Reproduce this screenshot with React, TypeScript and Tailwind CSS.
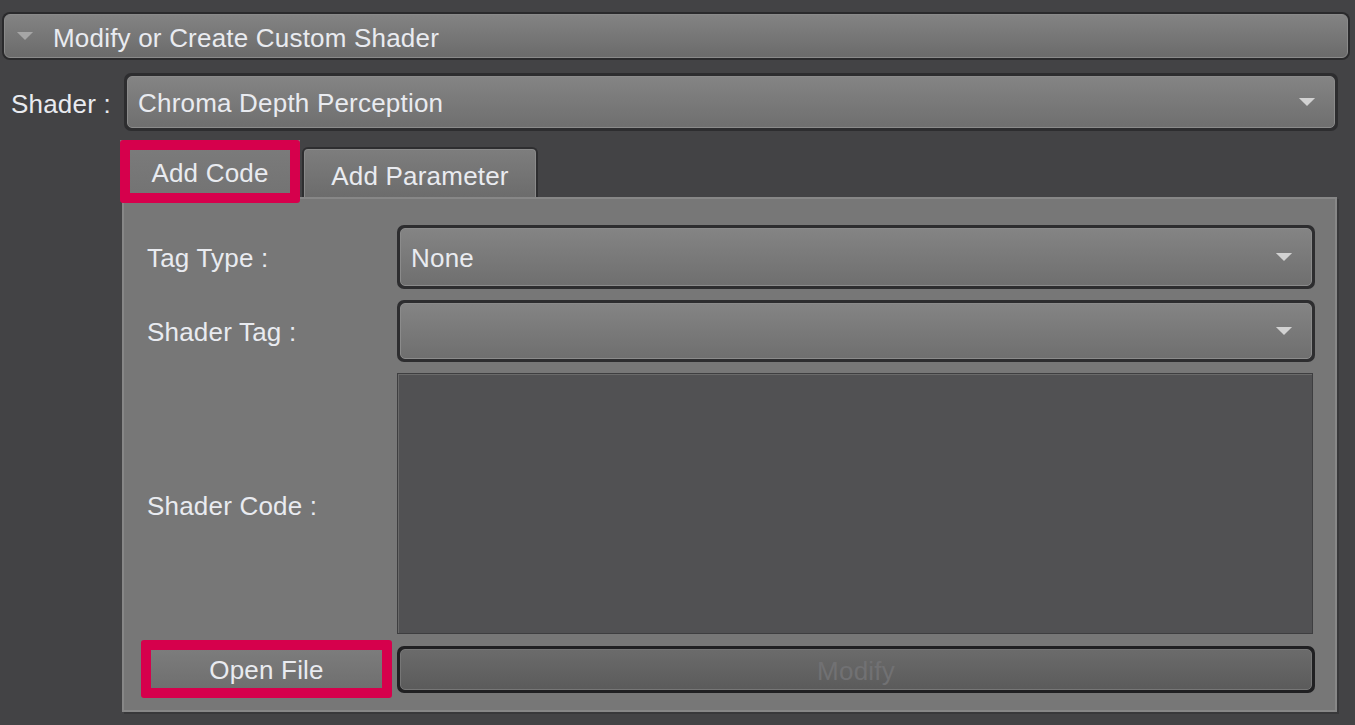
function Caret({ className = "" }: { className?: string }) {
  return (
    <svg viewBox="0 0 18 10" className={className}>
      <path d="M0 0 H18 L9 9 Z" fill="currentColor" />
    </svg>
  );
}

function Dropdown({ value, className = "" }: { value?: string; className?: string }) {
  return (
    <div className={`rounded-[7px] bg-[#2d2d2f] p-[3px] ${className}`}>
      <div className="flex h-full items-center rounded-[5px] border border-[#8b8b8b] bg-gradient-to-b from-[#848484] to-[#6f6f6f] pl-[10px] pr-[18px]">
        <span className="flex-1 truncate pt-[3px] leading-[1.3]">{value}</span>
        <Caret className="h-[9px] w-[18px] text-[#d2d2d2]" />
      </div>
    </div>
  );
}

export default function App() {
  return (
    <div className="h-[725px] w-[1355px] overflow-hidden bg-[#434345] font-['Liberation_Sans',Arial,sans-serif] text-[26px] leading-none tracking-[0.2px] text-[#e9ebf0]">
      {/* section header */}
      <div className="pl-[2px] pt-[12px]">
        <div className="h-[48px] w-[1348px] rounded-[8px] bg-[#2a2a2c] p-[2px]">
          <div className="flex h-full items-center rounded-[6px] border border-[#8a8a8a] bg-gradient-to-b from-[#838383] to-[#6b6b6b] pt-[3px]">
            <Caret className="ml-[11px] mb-[3px] h-[9px] w-[18px] text-[#a6a6a6]" />
            <span className="ml-[19px]">Modify or Create Custom Shader</span>
          </div>
        </div>
      </div>

      {/* shader select */}
      <div className="mt-[13px] flex h-[58px] items-center">
        <span className="w-[124px] pl-[11px] pt-[3px]">Shader :</span>
        <Dropdown value="Chroma Depth Perception" className="h-full w-[1214px]" />
      </div>

      {/* tabs */}
      <div className="mt-[9px] flex h-[57px] items-end pl-[120px]">
        <div className="relative h-[57px] w-[180px]">
          <div className="flex h-full items-center justify-center bg-gradient-to-b from-[#7c7c7c] to-[#737373] pt-[8px]">
            Add Code
          </div>
          <div className="absolute left-0 top-0 z-10 h-[63px] w-[180px] rounded-[3px] border-[10px] border-[#d6004c]" />
        </div>
        <div className="ml-[2px] h-[50px] w-[236px] rounded-t-[6px] border-2 border-b-0 border-[#2e2e30] bg-[#2e2e30]">
          <div className="flex h-full items-center justify-center rounded-t-[4px] border border-b-0 border-[#8a8a8a] bg-gradient-to-b from-[#7d7d7d] to-[#6c6c6c] pt-[4px]">
            Add Parameter
          </div>
        </div>
      </div>

      {/* tab panel */}
      <div className="ml-[122px] h-[515px] w-[1215px] border-2 border-[#878787] bg-[#777777] pt-[26px] shadow-[2px_2px_0_#38383a]">
        <div className="flex h-[64px] items-center">
          <span className="w-[273px] pl-[23px] pt-[2px]">Tag Type :</span>
          <Dropdown value="None" className="h-full w-[918px]" />
        </div>
        <div className="mt-[11px] flex h-[62px] items-center">
          <span className="w-[273px] pl-[23px] pt-[2px]">Shader Tag :</span>
          <Dropdown className="h-full w-[918px]" />
        </div>
        <div className="mt-[11px] flex h-[261px] items-center">
          <span className="w-[273px] pl-[23px] pt-[4px]">Shader Code :</span>
          <div className="h-full w-[916px] border border-[#3e3e40] bg-[#515153] shadow-[inset_1px_1px_0_#6a6a6a]" />
        </div>
        <div className="mt-[12px] flex h-[47px]">
          <div className="relative w-[273px]">
            <div className="absolute left-[17px] top-[-6px] z-10 h-[58px] w-[251px] rounded-[3px] border-[10px] border-[#d6004c] bg-gradient-to-b from-[#7c7c7c] to-[#6f6f6f]">
              <div className="flex h-full items-center justify-center pt-[2px]">Open File</div>
            </div>
          </div>
          <div className="h-full w-[918px] rounded-[7px] bg-[#202022] p-[3px]">
            <div className="flex h-full items-center justify-center rounded-[5px] border border-[#767676] bg-gradient-to-b from-[#6b6b6b] to-[#5b5b5b] pt-[2px] text-[#717173]">
              Modify
            </div>
          </div>
        </div>
      </div>
    </div>
  );
}
